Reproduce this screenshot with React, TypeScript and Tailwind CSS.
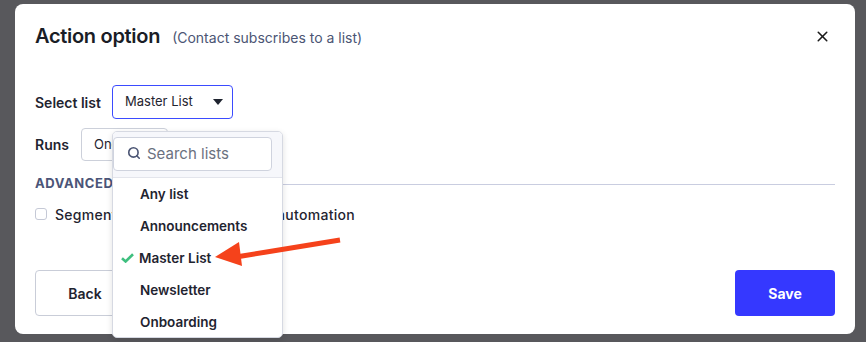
import { Search, X } from "lucide-react";

const lists = ["Any list", "Announcements", "Master List", "Newsletter", "Onboarding"];

export default function App() {
    return (
        <div
            className="h-[342px] w-[866px] overflow-hidden bg-[#58585c] pt-[4px] pl-[15px]"
            style={{ fontFamily: "Inter, 'Open Sans', sans-serif" }}
        >
            <div className="relative h-[330px] w-[840px] rounded-lg bg-white px-5 pt-[18px] text-[#1f2430]">
                {/* Header */}
                <div className="flex h-[28px] items-center justify-between pr-[4px]">
                    <div className="flex items-baseline gap-[12px]">
                        <h2 className="text-[20px] font-semibold tracking-[-0.3px] text-[#1a1d26]">Action option</h2>
                        <span className="text-[14px] text-[#4b5574]">(Contact subscribes to a list)</span>
                    </div>
                    <X className="h-[17px] w-[17px] text-[#1a1a1a]" strokeWidth={2.2} />
                </div>

                {/* Select list */}
                <div className="mt-[35px] flex h-[34px] items-center">
                    <span className="w-[77px] text-[14px] font-semibold">Select list</span>
                    <div className="relative">
                        <div className="flex h-[34px] w-[121px] items-center justify-between rounded-[4px] border border-[#3b4bff] pl-[12px] pr-[9px] text-[13px] text-[#1f2430]">
                            Master List
                            <svg width="10" height="6" viewBox="0 0 10 6">
                                <path d="M0 0h10L5 6z" fill="#1f2430" />
                            </svg>
                        </div>

                        {/* Dropdown */}
                        <div className="absolute left-0 top-[46px] z-10 h-[207px] w-[171px] overflow-hidden rounded-[5px] border border-[#d6d9e2] bg-white shadow-[0_2px_6px_rgba(0,0,0,0.12)]">
                            <div className="h-[46px] border-b border-[#e3e5ec] bg-[#f6f7fb] pr-[10px] pt-[5px]">
                                <div className="flex h-[34px] items-center gap-[6px] rounded-[4px] border border-[#cfd3de] bg-white pl-[13px]">
                                    <Search className="-mt-[3px] h-[14px] w-[14px] text-[#4b5574]" strokeWidth={2.8} />
                                    <span className="text-[15px] text-[#6b7180]">Search lists</span>
                                </div>
                            </div>
                            {lists.map((name) => (
                                <div key={name} className="flex h-[32px] items-center pl-[27px] text-[13.5px] font-semibold text-[#1f2430]">
                                    {name === "Master List" ? (
                                        <span className="-ml-[19px] mr-[5px] flex items-center">
                                            <svg width="13" height="10" viewBox="0 0 13 10">
                                                <path d="M1 5.2l3.6 3.3L12 1.2" fill="none" stroke="#3fbf7f" strokeWidth="2.6" />
                                            </svg>
                                        </span>
                                    ) : null}
                                    {name}
                                </div>
                            ))}
                        </div>
                    </div>
                </div>

                {/* Runs */}
                <div className="mt-[9px] flex h-[33px] items-center">
                    <span className="w-[46px] text-[14px] font-semibold">Runs</span>
                    <div className="flex h-[33px] w-[87px] items-center overflow-hidden whitespace-nowrap rounded-[4px] border border-[#ccd0da] pl-[12px] text-[13px]">
                        Once per contact
                    </div>
                </div>

                {/* Advanced */}
                <div className="mt-[14px] flex h-[18px] items-center gap-3">
                    <span className="text-[13px] font-bold tracking-[0.6px] text-[#4b5578]">ADVANCED</span>
                    <div className="h-px flex-1 bg-[#c9cde0]" />
                </div>

                <div className="mt-[11px] flex h-[20px] items-center gap-[8px]">
                    <div className="h-[12px] w-[12px] rounded-[3px] border border-[#c5c9d6]" />
                    <span className="text-[14px] font-medium tracking-[0.3px] text-[#1f2430]">Segment contacts entering this automation</span>
                </div>

                {/* Footer */}
                <div className="mt-[46px] flex items-center justify-between">
                    <button className="h-[46px] w-[100px] rounded-[4px] border border-[#c9cdd8] bg-white text-[14px] font-semibold">
                        Back
                    </button>
                    <button className="h-[46px] w-[100px] rounded-[4px] bg-[#3538ff] text-[14px] font-bold text-white">
                        Save
                    </button>
                </div>

                {/* Annotation arrow */}
                <svg className="absolute left-0 top-0 z-20" width="840" height="340" viewBox="15 4 840 340">
                    <path d="M340 240 L236 257" stroke="#f5421b" strokeWidth="5" strokeLinecap="butt" />
                    <path d="M215 257 L239 242 L242 266 Z" fill="#f5421b" />
                </svg>
            </div>
        </div>
    );
}
